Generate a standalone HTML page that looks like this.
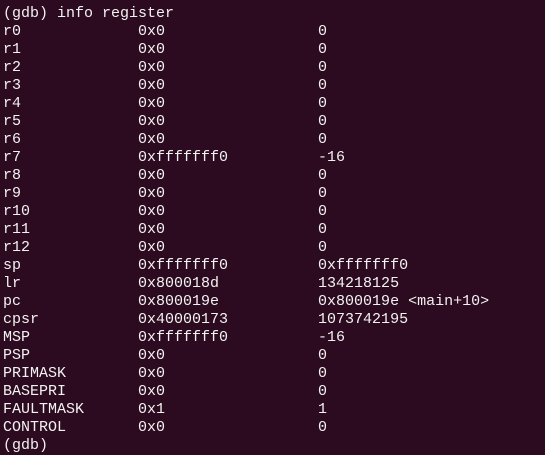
<!DOCTYPE html>
<html><head><style>
html,body{margin:0;padding:0;background:#2c0a1f;width:545px;height:442px;overflow:hidden}
pre{position:absolute;left:3px;top:5px;margin:0;font-family:"Liberation Mono",monospace;font-size:15px;line-height:18px;color:#f2f2f2;letter-spacing:0}
</style></head><body>
<pre>(gdb) info register
r0             0x0                 0
r1             0x0                 0
r2             0x0                 0
r3             0x0                 0
r4             0x0                 0
r5             0x0                 0
r6             0x0                 0
r7             0xfffffff0          -16
r8             0x0                 0
r9             0x0                 0
r10            0x0                 0
r11            0x0                 0
r12            0x0                 0
sp             0xfffffff0          0xfffffff0
lr             0x800018d           134218125
pc             0x800019e           0x800019e &lt;main+10&gt;
cpsr           0x40000173          1073742195
MSP            0xfffffff0          -16
PSP            0x0                 0
PRIMASK        0x0                 0
BASEPRI        0x0                 0
FAULTMASK      0x1                 1
CONTROL        0x0                 0
(gdb)</pre>
</body></html>
